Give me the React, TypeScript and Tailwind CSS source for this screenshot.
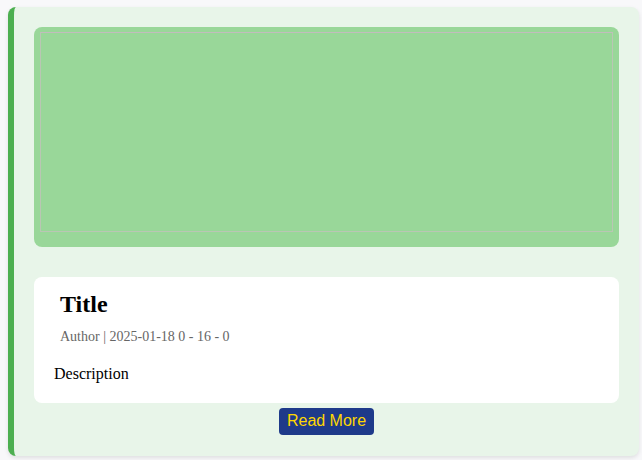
const App = () => {
  return (
    <div className="min-h-[460px] w-[642px] bg-[#f8f8fa] pt-[7px] pl-[8px]">
      <div className="flex w-[631px] flex-col rounded-lg border-l-[6px] border-[#4caf50] bg-[#e8f5e9] px-5 pt-5 pb-[21px] shadow-[0_2px_4px_rgba(0,0,0,0.1)]">
        <div className="flex h-[220px] flex-col rounded-lg bg-[#99d799] px-[6px] pt-[5px] pb-[15px]">
          <div className="flex-1 border border-[#c8bfc0]/70 border-t-[#c2bcbd]" />
        </div>

        <div className="mt-[30px] rounded-lg bg-white px-5 pt-[14px] pb-5 font-['Liberation_Serif',serif]">
          <h2 className="pl-1.5 text-2xl leading-[1.15] font-bold text-black">Title</h2>
          <p className="mt-[10px] pl-1.5 text-sm leading-[1.15] text-[#666666]">
            Author | 2025-01-18 0 - 16 - 0
          </p>
          <p className="mt-[20px] text-base leading-[1.15] text-black">Description</p>
        </div>

        <div className="mt-[5px] flex justify-center">
          <button className="flex h-[27px] items-center rounded bg-[#1e3a8a] px-2 font-['Liberation_Sans',sans-serif] text-base leading-[1.15] text-[#ffd700]">
            Read More
          </button>
        </div>
      </div>
    </div>
  );
};

export default App;
